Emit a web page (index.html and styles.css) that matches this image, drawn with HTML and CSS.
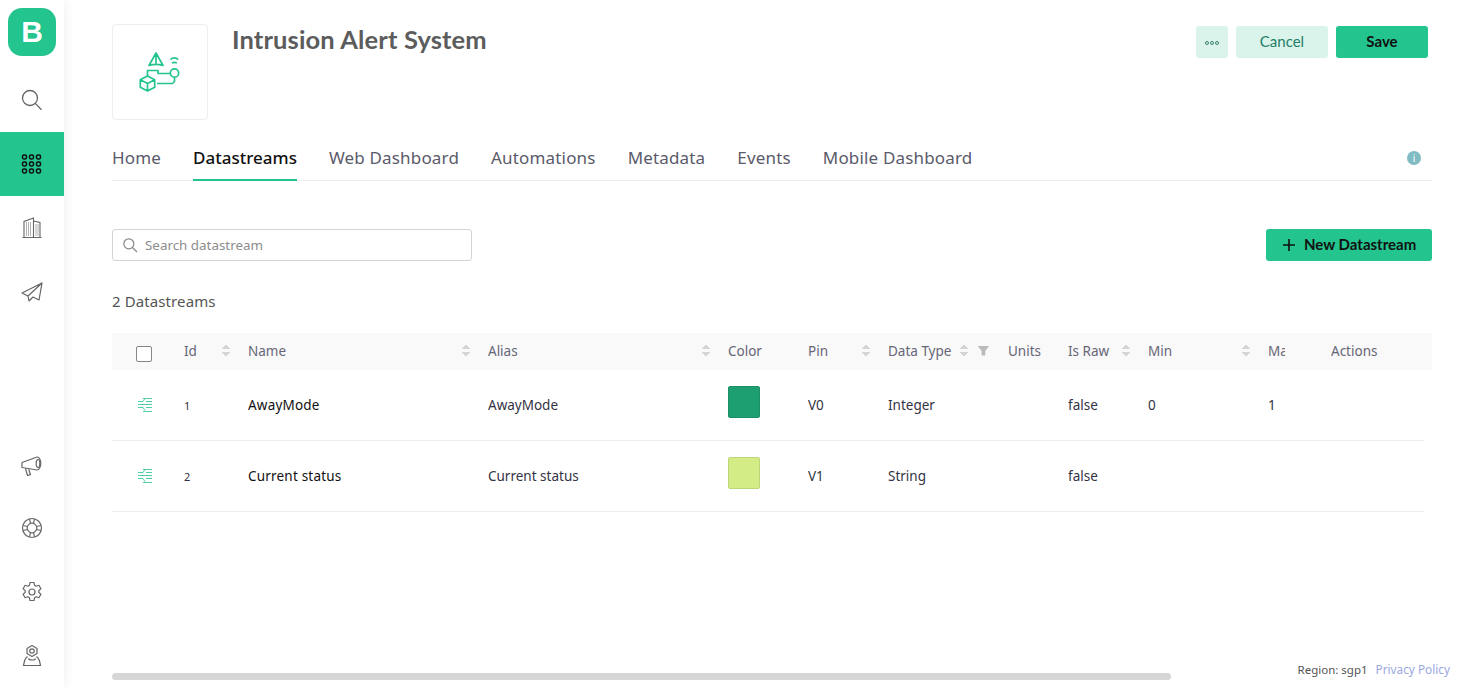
FILE: index.html
```html
<!DOCTYPE html>
<html>
<head>
<meta charset="utf-8">
<title>Intrusion Alert System</title>
<link rel="stylesheet" href="styles.css">
</head>
<body>

<div class="sidebar">
	<div class="logo">B</div>
	<div class="nav-item">
		<svg width="24" height="24" viewBox="0 0 24 24" fill="none" stroke="#666" stroke-width="1.3"><circle cx="10" cy="10" r="7.500"/><path d="M15.300 15.400l6.200 6.400"/></svg>
	</div>
	<div class="nav-item active">
		<svg width="24" height="24" viewBox="0 0 24 24" fill="none" stroke="#111" stroke-width="1.5"><rect x="2.500" y="3" width="4" height="4" rx="1.400"/><rect x="9.500" y="3" width="4" height="4" rx="1.400"/><rect x="16.500" y="3" width="4" height="4" rx="1.400"/><rect x="2.500" y="10" width="4" height="4" rx="1.400"/><rect x="9.500" y="10" width="4" height="4" rx="1.400"/><rect x="16.500" y="10" width="4" height="4" rx="1.400"/><rect x="2.500" y="17" width="4" height="4" rx="1.400"/><rect x="9.500" y="17" width="4" height="4" rx="1.400"/><rect x="16.500" y="17" width="4" height="4" rx="1.400"/></svg>
	</div>
	<div class="nav-item">
		<svg width="24" height="24" viewBox="0 0 24 24" fill="none" stroke="#666" stroke-width="1.100"><path d="M2.500 21.500h19M4 21.500V5.500l9.500-3.500v19.500M13.500 5l6.500 1.500v15"/><path d="M6 7h5.500M6 9h5.500M6 11h5.500M6 13h5.500M6 15h5.500M6 17h5.500M6 19h5.500M15.500 9h3M15.500 11h3M15.500 13h3M15.500 15h3M15.500 17h3M15.500 19h3" stroke-dasharray="1 1"/></svg>
	</div>
	<div class="nav-item">
		<svg width="24" height="24" viewBox="0 0 24 24" fill="none" stroke="#666" stroke-width="1.200" stroke-linejoin="round"><path d="M22 3L2 13l6 3zM22 3L8 16l1 5 4-4M22 3l-3 17-6-3-4 4"/></svg>
	</div>
	<div class="nav-spacer"></div>
	<div class="nav-item">
		<svg class="nudge" width="24" height="24" viewBox="0 0 24 24" fill="none" stroke="#666" stroke-width="1.200" stroke-linejoin="round"><path d="M2 8.500l15-5.500c2-.3 3.800 3 3.800 6.500s-1.800 6.500-3.800 6.500L2 13.500z"/><ellipse cx="18" cy="9.500" rx="1.800" ry="4"/><path d="M5.500 14.500l2 7 3-.8-1.800-5.500"/></svg>
	</div>
	<div class="nav-item">
		<svg width="24" height="24" viewBox="0 0 24 24" fill="none" stroke="#666" stroke-width="1.200"><circle cx="12" cy="12" r="9.500"/><circle cx="12" cy="12" r="4.800"/><path d="M9.500 2.800l1 4.700M14.500 2.800l-1 4.700M9.500 21.200l1-4.700M14.500 21.200l-1-4.700M2.800 9.500l4.700 1M2.800 14.500l4.700-1M21.200 9.500l-4.700 1M21.200 14.500l-4.700-1"/></svg>
	</div>
	<div class="nav-item">
		<svg width="24" height="24" viewBox="0 0 24 24" fill="none" stroke="#666" stroke-width="1.200" stroke-linejoin="round"><circle cx="12" cy="12" r="3"/><path d="M10 2.500h4l.6 2.800 1.600.9 2.700-.9 2 3.400-2.100 1.900v1.800l2.100 1.900-2 3.400-2.700-.9-1.600.9-.6 2.800h-4l-.6-2.800-1.600-.9-2.700.9-2-3.400 2.100-1.900v-1.800L3.100 8.700l2-3.400 2.700.9 1.600-.9z"/></svg>
	</div>
	<div class="nav-item">
		<svg width="24" height="24" viewBox="0 0 24 24" fill="none" stroke="#666" stroke-width="1.200" stroke-linejoin="round"><path d="M12 1.500l5 2.900v5.200l-5 2.900-5-2.900V4.400z"/><circle cx="12" cy="7" r="2.200"/><path d="M7.500 12.500C5.500 14 5 15 4.500 17l-1 4.500h17l-1-4.500c-.5-2-1-3-3-4.500M3.500 21.500h17"/><path d="M8.500 14.500c.5 2 7 2 7 0"/></svg>
	</div>
</div>

<div class="main">
	<div class="head">
		<div class="product-icon">
			<svg width="44" height="44" viewBox="0 0 44 44" fill="none" stroke="#23c48e" stroke-width="1.700" stroke-linejoin="round">
				<path d="M18 3l-7 12.500c4.500-1.500 9.500-1.500 14 0zM18 3v11.500"/>
				<path d="M32.500 9.500c2.300-1.800 5.500-1.800 7.800 0M34 13c1.400-.8 3.400-.8 4.800 0"/>
				<circle cx="36.500" cy="23" r="4.200"/>
				<path d="M9.500 26v-5.500h10.500v3h12"/>
				<path d="M19 33.500h15.500l2-2V27.500"/>
				<path d="M9.500 26l7.200 3.800v7.400L9.500 41l-7.200-3.800v-7.400zM2.300 29.800l7.200 3.800 7.200-3.800M9.500 33.600V41"/>
			</svg>
		</div>
		<h1 class="title">Intrusion Alert System</h1>
		<div class="head-actions">
			<button class="btn btn-light btn-dots"><span></span><span></span><span></span></button>
			<button class="btn btn-light btn-cancel">Cancel</button>
			<button class="btn btn-green btn-save">Save</button>
		</div>
	</div>

	<div class="tabs">
		<a class="tab">Home</a>
		<a class="tab current">Datastreams</a>
		<a class="tab">Web Dashboard</a>
		<a class="tab">Automations</a>
		<a class="tab">Metadata</a>
		<a class="tab">Events</a>
		<a class="tab">Mobile Dashboard</a>
		<span class="info">i</span>
	</div>

	<div class="toolbar">
		<div class="search">
			<svg width="16" height="16" viewBox="0 0 16 16" fill="none" stroke="#888" stroke-width="1.200"><circle cx="6.800" cy="6.800" r="5"/><path d="M10.500 10.500l4.500 4.500"/></svg>
			<span>Search datastream</span>
		</div>
		<button class="btn btn-green btn-new">
			<svg width="12" height="12" viewBox="0 0 12 12" stroke="#111" stroke-width="1.600"><path d="M6 0v12M0 6h12"/></svg>
			New Datastream
		</button>
	</div>

	<div class="count">2 Datastreams</div>

	<div class="table">
		<div class="row row-head">
			<div class="cell"><span class="checkbox"></span></div>
			<div class="cell">Id<span class="sort"></span></div>
			<div class="cell">Name<span class="sort"></span></div>
			<div class="cell">Alias<span class="sort"></span></div>
			<div class="cell">Color</div>
			<div class="cell">Pin<span class="sort"></span></div>
			<div class="cell">Data Type<span class="sort near"></span><span class="funnel"></span></div>
			<div class="cell">Units</div>
			<div class="cell">Is Raw<span class="sort"></span></div>
			<div class="cell">Min<span class="sort"></span></div>
			<div class="cell clip">Max</div>
			<div class="cell">Actions</div>
		</div>
		<div class="row row-body">
			<div class="cell"><svg class="drag" width="16" height="16" viewBox="0 0 16 16" fill="none" stroke="#23c48e" stroke-width="1"><path d="M6 1.500h9M1 4.500h5l2-3M9 4.500h6M1 7.500h14M1 10.500h5l2 3M9 10.500h6M6 14.500h9"/></svg></div>
			<div class="cell num">1</div>
			<div class="cell name">AwayMode</div>
			<div class="cell">AwayMode</div>
			<div class="cell"><span class="swatch dark"></span></div>
			<div class="cell">V0</div>
			<div class="cell">Integer</div>
			<div class="cell"></div>
			<div class="cell">false</div>
			<div class="cell">0</div>
			<div class="cell">1</div>
			<div class="cell"></div>
		</div>
		<div class="row row-body">
			<div class="cell"><svg class="drag" width="16" height="16" viewBox="0 0 16 16" fill="none" stroke="#23c48e" stroke-width="1"><path d="M6 1.500h9M1 4.500h5l2-3M9 4.500h6M1 7.500h14M1 10.500h5l2 3M9 10.500h6M6 14.500h9"/></svg></div>
			<div class="cell num">2</div>
			<div class="cell name">Current status</div>
			<div class="cell">Current status</div>
			<div class="cell"><span class="swatch lime"></span></div>
			<div class="cell">V1</div>
			<div class="cell">String</div>
			<div class="cell"></div>
			<div class="cell">false</div>
			<div class="cell"></div>
			<div class="cell"></div>
			<div class="cell"></div>
		</div>
	</div>
</div>

<div class="scrollbar"></div>
<div class="footer">Region: sgp1 <a class="privacy">Privacy Policy</a></div>

</body>
</html>
```

FILE: styles.css
```css
* {
	box-sizing: border-box;
}

html, body {
	height: 100%;
}

body {
	margin: 0;
	display: flex;
	overflow: hidden;
	background: #fff;
	font-family: "Noto Sans", "Open Sans", sans-serif;
	font-size: 13.5px;
	color: #333;
}

/* left rail */
.sidebar {
	flex: 0 0 64px;
	height: 100%;
	display: flex;
	flex-direction: column;
	background: #fff;
	box-shadow: 0 0 12px rgba(0,0,0,0.08);
	padding-top: 8px;
}

.logo {
	width: 48px;
	height: 48px;
	margin: 0 8px 12px;
	border-radius: 14px;
	background: #23c48e;
	color: #fff;
	font-family: "Liberation Sans", sans-serif;
	font-weight: bold;
	font-size: 30px;
	line-height: 48px;
	text-align: center;
}

.nav-item {
	height: 64px;
	display: flex;
	align-items: center;
	justify-content: center;
}

.nav-item.active {
	background: #23c48e;
}

.nav-spacer {
	flex: 1;
}

.nudge {
	margin-top: 3px;
}

/* page */
.main {
	flex: 1;
	min-width: 0;
	padding: 24px 34px 0 48px;
}

.head {
	display: flex;
	height: 96px;
}

.product-icon {
	width: 96px;
	height: 96px;
	display: flex;
	align-items: center;
	justify-content: center;
	border: 1px solid #eee;
	border-radius: 4px;
}

.title {
	margin: 0 0 0 24px;
	font-family: Lato, sans-serif;
	font-size: 25.5px;
	font-weight: 700;
	letter-spacing: 0.13px;
	line-height: 30px;
	color: #5c5c5c;
}

.head-actions {
	margin: 2px 4px 0 auto;
	display: flex;
	gap: 8px;
}

.btn {
	height: 32px;
	border: 0;
	border-radius: 3px;
	font-family: Lato, sans-serif;
	font-size: 15px;
	padding: 0 0 2px;
}

.btn-light {
	background: #daf4eb;
	color: #1f7f66;
}

.btn-green {
	background: #23c48e;
	color: #111;
	font-weight: 700;
}

.btn-dots {
	width: 32px;
	display: flex;
	align-items: center;
	justify-content: center;
	gap: 1px;
	padding: 2px 0 0;
}

.btn-dots span {
	width: 4px;
	height: 4px;
	border: 1px solid #3f7f72;
	border-radius: 50%;
}

.btn-cancel, .btn-save {
	width: 92px;
}

.tabs {
	display: flex;
	align-items: center;
	gap: 32px;
	height: 61px;
	border-bottom: 1px solid #eee;
}

.tab {
	height: 61px;
	padding-top: 26px;
	font-size: 17px;
	letter-spacing: 0.17px;
	line-height: 24px;
	color: #5a5a6a;
}

.tab.current {
	color: #111;
	font-weight: 500;
	letter-spacing: 0;
	border-bottom: 2px solid #23c48e;
}

.info {
	margin-left: auto;
	margin-right: 11px;
	margin-top: 15px;
	width: 14px;
	height: 14px;
	border-radius: 50%;
	background: #7fbcc4;
	color: #fff;
	font-size: 10px;
	line-height: 14px;
	text-align: center;
}

.toolbar {
	display: flex;
	justify-content: space-between;
	margin-top: 48px;
}

.search {
	width: 360px;
	height: 32px;
	display: flex;
	align-items: center;
	gap: 7px;
	padding-left: 9px;
	border: 1px solid #d4d4d4;
	border-radius: 3px;
	font-size: 13.4px;
	color: #8d8d8d;
}

.btn-new {
	width: 166px;
	display: flex;
	align-items: center;
	gap: 9px;
	padding-left: 17px;
}

.btn-new svg {
	margin-top: 2px;
}

.count {
	margin-top: 30px;
	line-height: 20px;
	font-size: 15px;
	letter-spacing: 0.1px;
	color: #555;
}

/* datastream table */
.table {
	margin-top: 22px;
}

.row {
	display: grid;
	grid-template-columns: 72px 64px 240px 240px 80px 80px 120px 60px 80px 120px 63px 101px;
	align-items: center;
}

.row-head {
	height: 37px;
	padding-bottom: 2px;
	background: #f9f9f9;
	color: #666677;
}

.row-body {
	height: 71px;
	width: 1312px;
	border-bottom: 1px solid #eee;
	color: #333344;
}

.cell {
	display: flex;
	align-items: center;
	white-space: nowrap;
	overflow: hidden;
}

.row .cell:first-child {
	padding-left: 24px;
}

/* the Max column is cut off in the header */
.clip {
	width: 17px;
}

.name {
	color: #111;
	letter-spacing: 0.2px;
}

.num {
	font-size: 11px;
}

.checkbox {
	width: 16px;
	height: 16px;
	margin-top: 6px;
	border: 1px solid #888;
	border-radius: 2px;
	background: #fff;
}

.drag {
	margin-left: 1px;
	opacity: 0.8;
}

.sort {
	width: 8px;
	height: 13px;
	margin-left: auto;
	margin-right: 18px;
	background:
		linear-gradient(to top left, #d4d4d4 50%, transparent 50%) 0 0 / 4px 5px no-repeat,
		linear-gradient(to top right, #d4d4d4 50%, transparent 50%) 4px 0 / 4px 5px no-repeat,
		linear-gradient(to bottom left, #d4d4d4 50%, transparent 50%) 0 8px / 4px 5px no-repeat,
		linear-gradient(to bottom right, #d4d4d4 50%, transparent 50%) 4px 8px / 4px 5px no-repeat;
}

.sort.near {
	margin-left: 9px;
	margin-right: 9px;
}

.funnel {
	width: 12px;
	height: 10px;
	background: #bbb;
	clip-path: polygon(0 0, 100% 0, 65% 55%, 65% 100%, 35% 100%, 35% 55%);
}

.swatch {
	display: block;
	width: 32px;
	height: 32px;
	margin-bottom: 6px;
	border-radius: 2px;
}

.swatch.dark {
	background: #1e9f71;
	border: 1px solid #1b8f66;
}

.swatch.lime {
	background: #d3ec85;
	border: 1px solid #bdd677;
}

/* things that float over the page */
.scrollbar {
	position: absolute;
	left: 112px;
	top: 673px;
	width: 1059px;
	height: 7px;
	border-radius: 4px;
	background: #d6d6d6;
}

.footer {
	position: absolute;
	right: 16px;
	top: 661px;
	font-size: 11.5px;
	line-height: 16px;
	color: #555;
}

.privacy {
	margin-left: 5px;
	font-size: 11.8px;
	color: #9aa8e0;
}
```
